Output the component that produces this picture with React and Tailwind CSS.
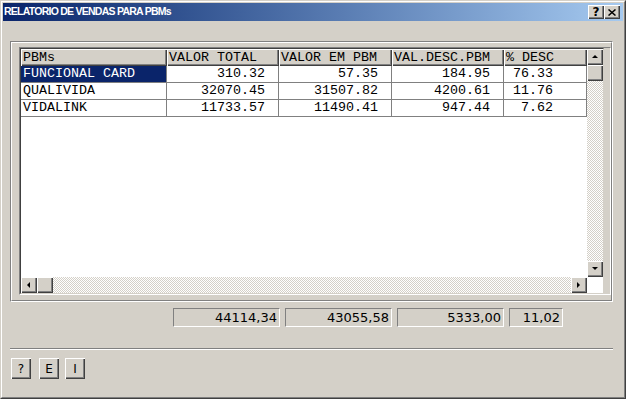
import React from 'react';

const rows = [
  { name: 'FUNCIONAL CARD', total: '310.32', pbm: '57.35', desc: '184.95', pct: '76.33', selected: true },
  { name: 'QUALIVIDA', total: '32070.45', pbm: '31507.82', desc: '4200.61', pct: '11.76' },
  { name: 'VIDALINK', total: '11733.57', pbm: '11490.41', desc: '947.44', pct: '7.62' },
];

const totals = [
  { value: '44114,34', w: 'w-[107px]' },
  { value: '43055,58', w: 'w-[107px]' },
  { value: '5333,00', w: 'w-[107px]' },
  { value: '11,02', w: 'w-[54px]' },
];

const raised = 'shadow-[inset_1px_1px_0_#ffffff,inset_-1px_-1px_0_#404040,inset_-2px_-2px_0_#808080]';
const dither = 'bg-[repeating-conic-gradient(#ffffff_0_25%,#d4d0c8_0_50%)] bg-[length:2px_2px]';

function Arrow({ dir }) {
  const pts = {
    up: '1,5 4,2 7,5',
    down: '1,2 4,5 7,2',
    left: '5,1 2,4 5,7',
    right: '2,1 5,4 2,7',
  }[dir];
  return (
    <svg width="8" height="8" viewBox="0 0 8 8">
      <polygon points={pts} fill="#000" />
    </svg>
  );
}

function ScrollButton({ dir }) {
  return (
    <div className={`w-[16px] h-[16px] bg-[#d4d0c8] flex items-center justify-center ${raised}`}>
      <Arrow dir={dir} />
    </div>
  );
}

function HeaderCell({ children, w }) {
  return (
    <div className={`${w} h-[17px] bg-[#d4d0c8] pl-[2px] leading-[17px] ${raised}`}>{children}</div>
  );
}

function Cell({ children, w, right, pr, selected }) {
  return (
    <div
      className={`${w} h-[17px] leading-[16px] border-r border-b border-[#808080] overflow-hidden whitespace-pre ${
        right ? `text-right ${pr}` : 'pl-[2px]'
      } ${selected ? 'bg-[#0a246a] text-white' : 'bg-white text-black'}`}
    >
      {children}
    </div>
  );
}

function Grid() {
  return (
    <div className="border border-t-[#808080] border-l-[#808080] border-b-white border-r-white">
      <div className="border border-t-[#404040] border-l-[#404040] border-b-[#d4d0c8] border-r-[#d4d0c8] w-[584px] bg-white">
        <div className="flex h-[228px]">
          <div className="w-[566px] font-['Liberation_Mono',monospace] text-[13.33px] text-black">
            <div className="flex">
              <HeaderCell w="w-[146px]">PBMs</HeaderCell>
              <HeaderCell w="w-[112px]">VALOR TOTAL</HeaderCell>
              <HeaderCell w="w-[113px]">VALOR EM PBM</HeaderCell>
              <HeaderCell w="w-[112px]">VAL.DESC.PBM</HeaderCell>
              <HeaderCell w="w-[83px]">% DESC</HeaderCell>
            </div>
            {rows.map((r) => (
              <div key={r.name} className="flex">
                <Cell w="w-[146px]" selected={r.selected}>{r.name}</Cell>
                <Cell w="w-[112px]" right pr="pr-[13px]">{r.total}</Cell>
                <Cell w="w-[113px]" right pr="pr-[13px]">{r.pbm}</Cell>
                <Cell w="w-[112px]" right pr="pr-[13px]">{r.desc}</Cell>
                <Cell w="w-[83px]" right pr="pr-[33px]">{r.pct}</Cell>
              </div>
            ))}
          </div>
          <div className="w-[16px] flex flex-col">
            <ScrollButton dir="up" />
            <div className={`w-[16px] h-[16px] bg-[#d4d0c8] ${raised}`} />
            <div className={`flex-1 ${dither}`} />
            <ScrollButton dir="down" />
          </div>
        </div>
        <div className="flex h-[16px]">
          <ScrollButton dir="left" />
          <div className={`w-[16px] h-[16px] bg-[#d4d0c8] ${raised}`} />
          <div className={`flex-1 ${dither}`} />
          <ScrollButton dir="right" />
          <div className="w-[16px] h-[16px] bg-white" />
        </div>
      </div>
    </div>
  );
}

function Button({ children }) {
  return (
    <div className={`w-[20px] h-[21px] bg-[#d4d0c8] flex items-center justify-center text-[12px] text-black font-['DejaVu_Sans',sans-serif] ${raised}`}>
      {children}
    </div>
  );
}

export default function App() {
  return (
    <div className="w-[626px] h-[399px] bg-[#d4d0c8] border border-t-[#d4d0c8] border-l-[#d4d0c8] border-b-[#404040] border-r-[#404040]">
      <div className="h-full border border-t-white border-l-white border-b-[#808080] border-r-[#808080] p-px flex flex-col">
        {/* title bar */}
        <div className="h-[18px] flex items-center justify-between bg-gradient-to-r from-[#0a246a] to-[#a6caf0] pl-[1px] pr-[3px]">
          <span className="text-white font-bold text-[10.5px] tracking-[-0.75px] font-['Liberation_Sans',sans-serif]">
            RELATORIO DE VENDAS PARA PBMs
          </span>
          <div className="flex">
            <div className={`w-[16px] h-[14px] bg-[#d4d0c8] flex items-center justify-center text-[12px] font-bold text-black font-['DejaVu_Sans',sans-serif] ${raised}`}>?</div>
            <div className={`w-[16px] h-[14px] bg-[#d4d0c8] flex items-center justify-center ${raised}`}>
              <svg width="8" height="7" viewBox="0 0 8 7">
                <path d="M0.5 0.5 L7.5 6.5 M7.5 0.5 L0.5 6.5" stroke="#000" strokeWidth="1.5" />
              </svg>
            </div>
          </div>
        </div>

        {/* group box */}
        <div className="ml-[7px] mt-[20px] w-[603px] h-[261px] border border-t-[#808080] border-l-[#808080] border-b-white border-r-white">
          <div className="h-full border border-t-white border-l-white border-b-[#808080] border-r-[#808080] pl-[7px] pt-[4px]">
            <Grid />
          </div>
        </div>

        {/* totals */}
        <div className="flex gap-[5px] ml-[170px] mt-[6px]">
          {totals.map((t) => (
            <div
              key={t.value}
              className={`${t.w} h-[19px] border border-t-[#808080] border-l-[#808080] border-b-white border-r-white text-right pr-[2px] leading-[17px] text-[13px] text-black font-['DejaVu_Sans',sans-serif]`}
            >
              {t.value}
            </div>
          ))}
        </div>

        {/* separator */}
        <div className="ml-[7px] mt-[21px] w-[603px] border-t border-t-[#808080] border-b border-b-white" />

        {/* buttons */}
        <div className="flex ml-[8px] mt-[8px]">
          <Button>?</Button>
          <div className="w-[8px]" />
          <Button>E</Button>
          <div className="w-[6px]" />
          <Button>I</Button>
        </div>
      </div>
    </div>
  );
}
